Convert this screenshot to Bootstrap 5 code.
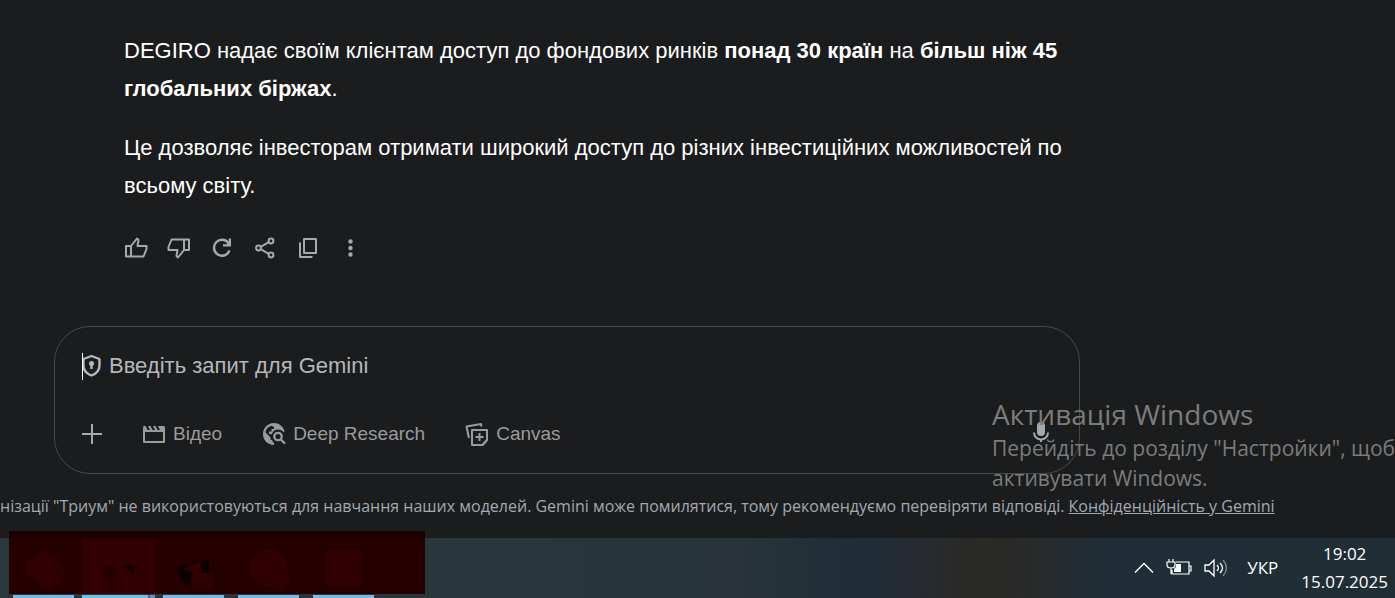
<!DOCTYPE html>
<html lang="uk" data-bs-theme="dark">
<head>
<meta charset="utf-8">
<meta name="viewport" content="width=device-width, initial-scale=1">
<title>Gemini</title>
<link href="https://cdn.jsdelivr.net/npm/bootstrap@5.3.0/dist/css/bootstrap.min.css" rel="stylesheet">
<style>
  body { background: #1b1c1d; font-family: "Liberation Sans", Roboto, sans-serif; color: #fff; }
  svg { display: block; fill: currentColor; flex: none; }
  .chat-area { padding: 32px 16px 0 54px; }
  .column { max-width: 1026px; }
  .answer { padding-left: 70px; font-size: 22px; line-height: 38px; }
  .answer p { margin-bottom: 21px; }
  .icon-btn, .tool-btn { background: none; border: 0; padding: 0; color: #a2a9b0; display: flex; align-items: center; }
  .answer-actions { gap: 17px; margin-top: 29px; height: 27px; margin-left: -1px; }
  .tool-btn { color: #9a9b9c; font-size: 19px; line-height: 28px; gap: 7px; margin-left: 40px; }
  .composer { border: 1px solid #47494b; border-radius: 36px; height: 148px; margin-top: 65px; padding: 25px 24px 26px 27px; }
  .prompt-row { height: 28px; color: #b4b8bd; }
  .caret { width: 1px; height: 27px; background: #fff; }
  .prompt-row input { background: none; border: 0; outline: 0; padding: 0; margin-left: 7px; font-size: 22px; line-height: 28px; color: inherit; }
  .prompt-row input::placeholder { color: #b4b8bd; opacity: 1; }
  .tools { margin-top: 40px; }
  .disclaimer { margin: 20px 0 19px; font-family: "Open Sans", "Noto Sans", sans-serif; font-size: 16px; line-height: 25px; color: #a2a9b0; }
  .disclaimer a { color: inherit; }
  .watermark { right: 0; top: 395px; width: 403px; font-family: "Open Sans", "Noto Sans", sans-serif; font-size: 21px; line-height: 30px; color: #7b7c7c; white-space: nowrap; }
  .watermark strong { display: block; font-size: 28px; font-weight: 400; line-height: 38px; }
  .taskbar { height: 60px; font-family: "Open Sans", "Noto Sans", sans-serif; font-size: 17px;
    background: linear-gradient(90deg, #29383e 0%, #28373c 38%, #283439 53%, #212f38 59%, #212d36 63%, #262a31 66%, #292a28 69%, #2a2926 72%, #272b2d 75%, #1f2e37 79%, #202d35 100%); }
  .redaction { left: 9px; top: -7px; }
  .apps { padding-left: 13px; gap: 14px; }
  .app-mark { height: 3px; width: 61px; background: #76b9ed; }
  .app-active { width: 73px; margin: 0 -6px; background: linear-gradient(90deg, #76b9ed 66px, #456b88 66px, #456b88 68px, #5f93bd 68px); }
  .tray { padding-right: 7px; gap: 12px; }
  .lang { margin: 0 11px 0 7px; }
  .clock { line-height: 28px; }
</style>
</head>
<body>
<div class="position-relative overflow-hidden">
  <main>
    <div class="chat-area">
      <div class="column">
        <article class="answer">
          <p>DEGIRO надає своїм клієнтам доступ до фондових ринків <b>понад 30 країн</b> на <b>більш ніж 45 глобальних біржах</b>.</p>
          <p class="mb-0">Це дозволяє інвесторам отримати широкий доступ до різних інвестиційних можливостей по всьому світу.</p>
          <div class="answer-actions d-flex align-items-center">
            <button class="icon-btn" aria-label="Подобається"><svg width="26" height="26" viewBox="0 0 26 26"><path fill="none" stroke="currentColor" stroke-width="2" stroke-linejoin="round" d="M8 11v10.500M3 11h5l6-7.500 1.500 1.500-1 6H23.500v3l-3 7.500H3z"/></svg></button>
            <button class="icon-btn" aria-label="Не подобається"><svg width="26" height="26" viewBox="0 0 26 26"><path fill="none" stroke="currentColor" stroke-width="2" stroke-linejoin="round" d="M18 15V4.500M23 15h-5l-6 7.500-1.500-1.500 1-6H2.500v-3l3-7.500H23z"/></svg></button>
            <button class="icon-btn" aria-label="Повторити"><svg width="26" height="26" viewBox="0 0 26 26"><path fill="none" stroke="currentColor" stroke-width="2.400" d="M19.500 8A8 8 0 1 0 20.500 15.500"/><path d="M22 3.500v8h-8v-2.300h3.500l2.200-2V3.500z"/></svg></button>
            <button class="icon-btn" aria-label="Поділитися"><svg width="26" height="26" viewBox="0 0 26 26"><g fill="none" stroke="currentColor" stroke-width="2"><circle cx="19" cy="6" r="2.400"/><circle cx="6.500" cy="13" r="2.400"/><circle cx="19" cy="20" r="2.400"/><path d="M8.700 11.800l8-4.600M8.700 14.200l8 4.600"/></g></svg></button>
            <button class="icon-btn" aria-label="Копіювати"><svg width="26" height="26" viewBox="0 0 26 26"><path fill="none" stroke="currentColor" stroke-width="2" stroke-linejoin="round" d="M9 4h12v14H9zM5 7.500v14.500h12.500"/></svg></button>
            <button class="icon-btn" aria-label="Інші дії"><svg width="26" height="26" viewBox="0 0 26 26"><circle cx="12.500" cy="6.500" r="2.200"/><circle cx="12.500" cy="13" r="2.200"/><circle cx="12.500" cy="19.500" r="2.200"/></svg></button>
          </div>
        </article>
        <form class="composer" onsubmit="return false">
          <div class="prompt-row d-flex align-items-center">
            <span class="caret"></span>
            <svg width="19" height="24" viewBox="0 0 19 24"><path fill="none" stroke="currentColor" stroke-width="2.400" stroke-linejoin="round" d="M8.500 2l8 3v6.500c0 4.500-3.200 8.200-8 10-4.800-1.800-8-5.500-8-10V5z"/><circle cx="8.500" cy="9.500" r="2.500"/><path d="M7.300 10h2.400v5H7.300z"/></svg>
            <input class="flex-grow-1" type="text" aria-label="Запит" placeholder="Введіть запит для Gemini">
          </div>
          <div class="tools d-flex align-items-center">
            <button class="icon-btn" type="button" aria-label="Додати"><svg width="20" height="20" viewBox="0 0 20 20"><path fill="none" stroke="currentColor" stroke-width="2" d="M10 0v20M0 10h20"/></svg></button>
            <button class="tool-btn" type="button"><svg width="24" height="24" viewBox="0 0 24 24"><path fill-rule="evenodd" d="M2.500 4h1l2 4h2.500L6 4h2.500l2 4H13l-2-4h2.500l2 4H18l-2-4h5.500c1 0 1.500.5 1.500 1.500v14c0 1-.5 1.500-1.500 1.500H2.500C1.500 21 1 20.500 1 19.500v-14C1 4.500 1.500 4 2.500 4zM3 10v9h18v-9z"/></svg>Відео</button>
            <button class="tool-btn" type="button"><svg width="24" height="24" viewBox="0 0 24 24"><path d="M12 1C5.500 1 1 6 1 12s4.500 10.700 11 11v-2.200c-1-.2-1.500-1-1.500-2.300l-2-1v-2L3.400 10.300C4 7 6.500 4.500 9.500 3.700L12 5v2h-2.500v2.500H7v2.500l3 .3C10.500 9 13 7.500 16 7.500c2.500 0 4.500 1 5.800 3L22.500 9C21 4.500 17 1 12 1z"/><g fill="none" stroke="currentColor" stroke-width="2.300"><circle cx="16" cy="14.500" r="3.700"/><path d="M18.600 17.200l4.400 4.400"/></g></svg>Deep Research</button>
            <button class="tool-btn" type="button"><svg width="24" height="24" viewBox="0 0 24 24"><g fill="none" stroke="currentColor" stroke-width="2" stroke-linejoin="round"><path d="M7 8h15v10l-4.500 5H7zM14.500 11v8M10.500 15h8M4 16L1.500 4.500 16 2l.5 2.500"/><path d="M21.500 18.500L18 22.500"/></g></svg>Canvas</button>
            <button class="icon-btn ms-auto" type="button" aria-label="Мікрофон"><svg width="28" height="28" viewBox="0 0 28 28"><rect x="10" y="2" width="8" height="14" rx="4"/><path fill="none" stroke="currentColor" stroke-width="2" d="M7 12.500a7 7 0 0 0 14 0M14 19.500V22"/></svg></button>
          </div>
        </form>
      </div>
    </div>
    <p class="disclaimer text-nowrap">нізації "Триум" не використовуються для навчання наших моделей. Gemini може помилятися, тому рекомендуємо перевіряти відповіді. <a href="#">Конфіденційність у Gemini</a></p>
  </main>
  <aside class="watermark position-absolute pe-none"><strong>Активація Windows</strong>Перейдіть до розділу "Настройки", щоб<br>активувати Windows.</aside>
  <footer class="taskbar position-relative d-flex justify-content-between">
    <div class="apps d-flex align-items-end">
      <span class="app-mark"></span><span class="app-mark app-active"></span><span class="app-mark"></span><span class="app-mark"></span><span class="app-mark"></span>
    </div>
    <svg class="redaction position-absolute" width="416" height="63" viewBox="0 0 416 63">
      <path fill="#250000" d="M0 0h416v63H0z"/><path fill="#1a0000" d="M0 0h416v7H0z"/>
      <path fill="#320000" d="M73 7h73v56H73z"/>
      <g fill="#310000"><path d="M16 28h14v18H16z"/><circle cx="35" cy="26" r="6"/><circle cx="45" cy="27" r="4"/><circle cx="40" cy="43" r="15"/>
      <circle cx="259" cy="37" r="18"/><circle cx="270" cy="47" r="11"/><path d="M316 19h36v36h-36z"/></g>
      <path fill="#260000" d="M92 34q5 2 11 1 5 2 4 10 0 6 2 10-13-1-17-21z"/>
      <path fill="#100000" d="M112 37q8-7 13 1v7q-2 0-3-4-4-5-10-4z"/>
      <path fill="#0d0000" d="M169 37q-1 14 13 18V43h18V29q-9-1-31 8z"/><path fill="#310000" d="M174 38l18-8v12h12v13q0 3-3 3h-14q-4 0-4-5V41z"/>
    </svg>
    <div class="tray d-flex align-items-center">
      <svg width="20" height="12" viewBox="0 0 20 12"><path fill="none" stroke="#fff" stroke-width="1.400" d="M1 10.500L10 1.500l9 9"/></svg>
      <svg width="26" height="20" viewBox="0 0 26 20"><path fill="none" stroke="#fff" stroke-width="1.200" d="M10 4h13v12H6v-4M23 8h2v5h-2M3 1v3M7 1v3M1 4h8v3q0 3-4 3t-4-3zM5 10v6"/><path fill="#fff" d="M10 6h5v8H8v-3l2-2z"/></svg>
      <svg width="24" height="20" viewBox="0 0 24 20"><path fill="none" stroke="#fff" stroke-width="1.300" d="M1 7h4l5-5v16l-5-5H1zM13 7q3 3 0 6M16 5q5 5 0 10"/><path fill="none" stroke="#82898d" stroke-width="1.300" d="M19 2q7 8 0 16"/></svg>
      <span class="lang">УКР</span>
      <div class="clock text-center">19:02<br>15.07.2025</div>
    </div>
  </footer>
</div>
<script src="https://cdn.jsdelivr.net/npm/bootstrap@5.3.0/dist/js/bootstrap.bundle.min.js"></script>
</body>
</html>
